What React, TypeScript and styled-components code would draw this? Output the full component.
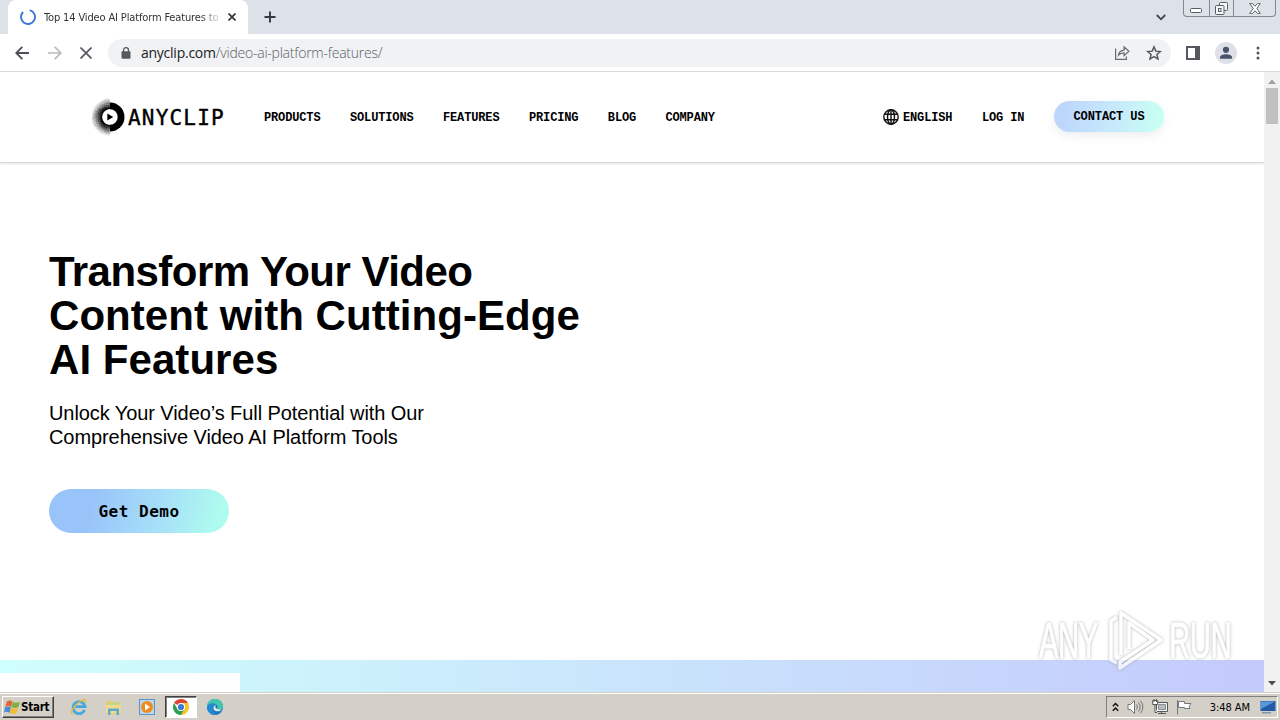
import styled, { createGlobalStyle } from "styled-components";

const uiFont = `"DejaVu Sans Condensed", "DejaVu Sans", sans-serif`;

const navLinks = [
    { label: "PRODUCTS", width: 56.7 },
    { label: "SOLUTIONS", width: 63.7 },
    { label: "FEATURES", width: 56.7 },
    { label: "PRICING", width: 49.6 },
    { label: "BLOG", width: 28.3 },
    { label: "COMPANY", width: 50 },
];

// 로고 왼쪽의 흩어지는 점들
const logoDots = Array.from({ length: 600 }, (_, i) => {
    const angle = Math.PI / 2 + ((i * 0.618034) % 1) * Math.PI;
    const radius = 8 + ((i * 0.7548777) % 1) ** 1.2 * 10.5;
    return {
        x: 18 + Math.cos(angle) * radius,
        y: 20 + Math.sin(angle) * radius,
        opacity: Math.max(0.08, 0.6 - (radius - 8) / 19),
    };
});

const App = () => {
    return (
        <Screen>
            <GlobalStyle />
            <TabStrip>
                <Tab>
                    <Spinner viewBox="0 0 16 16">
                        <path d="M9.7 1.2A7 7 0 1 1 3.1 3" fill="none" stroke="#3b78d8" strokeWidth="1.9" />
                    </Spinner>
                    <TabTitle>Top 14 Video AI Platform Features to</TabTitle>
                    <svg width="8" height="8" viewBox="0 0 8 8">
                        <path d="M.5.5l7 7M7.5.5l-7 7" stroke="#333639" strokeWidth="1.7" />
                    </svg>
                </Tab>
                <NewTab viewBox="0 0 12 12">
                    <path d="M6 .5v11M.5 6h11" stroke="#36393d" strokeWidth="1.9" />
                </NewTab>
                <TabSearch viewBox="0 0 10 7">
                    <path d="M.8 1l4.2 4.3L9.2 1" fill="none" stroke="#424548" strokeWidth="1.8" />
                </TabSearch>
                <WindowButtons>
                    <WindowButton $width={25}>
                        <svg width="12" height="5" viewBox="0 0 12 5">
                            <rect x=".5" y=".5" width="11" height="4" rx="1" fill="#fff" stroke="#565a62" />
                        </svg>
                    </WindowButton>
                    <WindowButton $width={25}>
                        <svg width="13" height="13" viewBox="0 0 13 13" fill="#f7f8fa" stroke="#565a62">
                            <rect x="4.5" y=".5" width="8" height="8" rx="1" />
                            <rect x=".5" y="3.5" width="8.5" height="9" rx="1" />
                            <rect x="3.5" y="6.5" width="2.5" height="3" />
                        </svg>
                    </WindowButton>
                    <WindowButton $width={42}>
                        <svg width="12" height="11" viewBox="0 0 12 11">
                            <path
                                d="M.7.6h3L6 3.3 8.3.6h3L7.8 5.5l3.5 4.9h-3L6 7.7l-2.3 2.7h-3l3.5-4.9z"
                                fill="#fff"
                                stroke="#62666e"
                            />
                        </svg>
                    </WindowButton>
                </WindowButtons>
            </TabStrip>

            <Toolbar>
                <NavIcons>
                    <svg width="14" height="14" viewBox="0 0 14 14">
                        <path d="M14 7H1.5M7.3.9L1.2 7l6.1 6.1" fill="none" stroke="#4b4e52" strokeWidth="1.8" />
                    </svg>
                    <svg width="14" height="14" viewBox="0 0 14 14">
                        <path d="M0 7h12.5M6.7.9L12.8 7l-6.1 6.1" fill="none" stroke="#b8babd" strokeWidth="1.7" />
                    </svg>
                    <svg width="12" height="12" viewBox="0 0 12 12">
                        <path d="M.5.5l11 11M11.5.5l-11 11" stroke="#55585c" strokeWidth="1.7" />
                    </svg>
                </NavIcons>
                <AddressBar>
                    <svg width="10" height="12" viewBox="0 0 10 12">
                        <path d="M2.5 5V3a2.5 2.3 0 0 1 5 0v2" fill="none" stroke="#55585c" strokeWidth="1.3" />
                        <rect x=".5" y="4.3" width="9" height="7.5" rx="1" fill="#55585c" />
                    </svg>
                    <Url>
                        <b>anyclip.com</b>/video-ai-platform-features/
                    </Url>
                    <svg width="16" height="15" viewBox="0 0 16 15" fill="none" stroke="#686b70" strokeWidth="1.2">
                        <path d="M1.6 3.5v10.9h10.8v-3" />
                        <path d="M4.5 10.2c.5-3 2.3-4.9 5.6-5.1V1.8l4.8 4.5-4.8 4.4V7.9c-2.4 0-4.2.7-5.6 2.3z" />
                    </svg>
                    <Star viewBox="0 0 24 24">
                        <path
                            d="M12 2.8l2.7 6.4 6.9.6-5.2 4.5 1.6 6.8-6-3.6-6 3.6 1.6-6.8-5.2-4.5 6.9-.6z"
                            fill="none"
                            stroke="#53565a"
                            strokeWidth="2.2"
                        />
                    </Star>
                </AddressBar>
                <SidePanelIcon viewBox="0 0 14 14">
                    <path d="M1 1h12v12H1z" fill="#fff" stroke="#55585c" strokeWidth="2" />
                    <path d="M9 1h4v12H9z" fill="#55585c" />
                </SidePanelIcon>
                <Avatar viewBox="0 0 22 22">
                    <circle cx="11" cy="11" r="11" fill="#dde1e7" />
                    <circle cx="11" cy="7.8" r="3.1" fill="#49546c" />
                    <path d="M5 16.8v-1.5c0-4 12-4 12 0v1.5z" fill="#49546c" />
                </Avatar>
                <svg width="4" height="14" viewBox="0 0 4 14" fill="#505357">
                    <circle cx="2" cy="2" r="1.5" />
                    <circle cx="2" cy="7" r="1.5" />
                    <circle cx="2" cy="12" r="1.5" />
                </svg>
            </Toolbar>

            <Viewport>
                <Page>
                    <SiteHeader>
                        <Logo>
                            <svg width="36" height="40" viewBox="0 0 36 40">
                                {logoDots.map((dot, i) => (
                                    <circle key={i} cx={dot.x} cy={dot.y} r=".75" opacity={dot.opacity} />
                                ))}
                                <path d="M18 5.5a14.5 14.5 0 0 1 0 29z" />
                                <circle cx="18" cy="20" r="7.7" fill="#fff" />
                                <path d="M15.3 16.4l6 3.5-6 3.6z" />
                            </svg>
                            <LogoName>ANYCLIP</LogoName>
                        </Logo>
                        <Menu>
                            {navLinks.map((link) => (
                                <MenuLink key={link.label} $width={link.width}>
                                    {link.label}
                                </MenuLink>
                            ))}
                        </Menu>
                        <HeaderActions>
                            <Language>
                                <svg width="16" height="16" viewBox="0 0 16 16" fill="none" stroke="#111" strokeWidth="1.4">
                                    <circle cx="8" cy="8" r="7.2" />
                                    <ellipse cx="8" cy="8" rx="3.5" ry="7.2" />
                                    <path d="M8 .8v14.4M1.3 5.3h13.4M1.3 10.7h13.4" />
                                </svg>
                                <MenuLink $width={50}>ENGLISH</MenuLink>
                            </Language>
                            <MenuLink $width={43}>LOG IN</MenuLink>
                            <ContactButton>CONTACT US</ContactButton>
                        </HeaderActions>
                    </SiteHeader>

                    <Hero>
                        <Headline>
                            <HeadlineLine $spacing={-0.54}>Transform Your Video</HeadlineLine>
                            <HeadlineLine $spacing={0.05}>Content with Cutting-Edge</HeadlineLine>
                            <HeadlineLine $spacing={0.05}>AI Features</HeadlineLine>
                        </Headline>
                        <Lead>
                            Unlock Your Video’s Full Potential with Our
                            <br />
                            Comprehensive Video AI Platform Tools
                        </Lead>
                        <DemoButton>Get Demo</DemoButton>
                    </Hero>

                    <Band>
                        <StatusBubble />
                    </Band>
                </Page>
                <Scrollbar>
                    <svg width="8" height="5" viewBox="0 0 8 5">
                        <path d="M0 5l4-4.5L8 5z" fill="#a0a0a0" />
                    </svg>
                    <Thumb />
                    <ScrollDown viewBox="0 0 8 5">
                        <path d="M0 0h8L4 4.5z" fill="#4c4c4c" />
                    </ScrollDown>
                </Scrollbar>
            </Viewport>

            <Taskbar>
                <StartButton>
                    <svg width="17" height="16" viewBox="0 0 17 16">
                        <path d="M3 2.3C5 1 7 1.2 8.5 2.4L7.2 8C5.3 6.500 3.500 6.600 1.200 7.900z" fill="#e2663a" />
                        <path d="M9 2.700c2 1.200 4.500 1.200 7 0L14.400 8c-2.200 1.200-4.700 1.200-6.900.2z" fill="#7fb143" />
                        <path d="M1 8.400c2-1.300 4-1.200 6-.1L5.500 14C3.500 12.500 1.800 12.600 0 13.600z" fill="#4b8bd0" />
                        <path d="M7.300 8.700c2 1.100 4.500 1 6.900-.2l-1.500 5.500c-2.300 1.300-4.800 1.200-7 .1z" fill="#f1bd38" />
                    </svg>
                    Start
                </StartButton>
                <QuickLaunch>
                    <TaskItem>
                        <svg width="18" height="18" viewBox="0 0 18 18" fill="none">
                            <path d="M14.6 12A6 6 0 1 1 15 8.7H5.3" stroke="#45a9df" strokeWidth="2.8" />
                            <path d="M3 15.5C-1 17 3 8 10 3.5c5-3.2 7-1.5 5 1.5" stroke="#e8bd43" strokeWidth="1.4" />
                        </svg>
                    </TaskItem>
                    <TaskItem>
                        <svg width="17" height="17" viewBox="0 0 17 17">
                            <path d="M1 3l1-1h4l1 1h8v12H1z" fill="#e6c96b" />
                            <path d="M3 4h11v3H3z" fill="#b8d995" />
                            <path d="M1 6h15v8H1z" fill="#f0dc8c" />
                            <path d="M3 16V9.5h11V16h-2.500v-4h-6v4z" fill="#5faad4" />
                        </svg>
                    </TaskItem>
                    <TaskItem>
                        <svg width="16" height="16" viewBox="0 0 16 16">
                            <rect x=".5" y=".5" width="15" height="15" fill="#b9d9f2" stroke="#5b94c8" />
                            <circle cx="8" cy="8" r="6" fill="#ef8a1d" />
                            <path d="M6 4.5l5 3.5-5 3.5z" fill="#fff" />
                        </svg>
                    </TaskItem>
                    <TaskItem $active>
                        <svg width="16" height="16" viewBox="0 0 16 16">
                            <path d="M8 8L1.07 4A8 8 0 0 1 14.93 4z" fill="#dc4437" />
                            <path d="M8 8V4h6.93A8 8 0 0 1 8 16z" fill="#f6c629" />
                            <path d="M8 16A8 8 0 0 1 1.07 4L4.5 10 8 12l3.5-2z" fill="#2f9e50" />
                            <circle cx="8" cy="8" r="4" fill="#fff" />
                            <circle cx="8" cy="8" r="3.1" fill="#3b78d8" />
                        </svg>
                    </TaskItem>
                    <TaskItem>
                        <svg width="16" height="16" viewBox="0 0 16 16">
                            <circle cx="8" cy="8" r="8" fill="#1675c0" />
                            <path d="M0 8C.5-2.5 15.5-2.5 16 7.5c0 3-4 4-6.2 2.5C13 6 5 1 0 8z" fill="#42c6ae" />
                            <path d="M0 8C1 4 6 3 9 6 5 6 4 12 10 15.7 4 17 0 13 0 8z" fill="#2289d3" />
                            <path d="M9 6c-1.500 1.500-.8 5 6 4.500-2 2.500-7.500 2.500-8.500-.5C6 8 7.500 6 9 6z" fill="#d9e9e9" />
                        </svg>
                    </TaskItem>
                </QuickLaunch>
                <Tray>
                    <svg width="7" height="10" viewBox="0 0 7 10" fill="none" stroke="#111" strokeWidth="1.5">
                        <path d="M.8 4.3l2.7-2.8 2.7 2.8M.8 8.8L3.5 6l2.7 2.8" />
                    </svg>
                    <svg width="17" height="16" viewBox="0 0 17 16" fill="none" stroke="#74777b">
                        <path d="M1 5.5h2.5L7.5 1.500v13l-4-4H1z" fill="#fff" />
                        <path d="M9.5 5.5q1.8 2.5 0 5M11.5 3.5q3.3 4.5 0 9M13.5 1.7q4.8 6.3 0 12.6" />
                    </svg>
                    <svg width="16" height="16" viewBox="0 0 16 16" stroke="#55585b">
                        <path d="M4.5 3.5h11v9h-11z" fill="#f5f5f2" />
                        <path d="M6.5 5.5h7v5h-7z" fill="#b9bcbd" stroke="#8c8f91" />
                        <path d="M6 14.5h8M9.5 12.5v2" fill="none" />
                        <path d="M.7 1.5v4h5v-4zM2 0v3M4.5 0v3M3 5.5v8h2" fill="#fff" />
                    </svg>
                    <svg width="17" height="16" viewBox="0 0 17 16" fill="#fff" stroke="#74777b">
                        <path d="M1.5 1v14.5M2.5 2.5h6v2h6.5l-2 3 1 2H8.5v-1h-6z" />
                    </svg>
                    <Clock>3:48 AM</Clock>
                    <svg width="16" height="14" viewBox="0 0 16 14">
                        <path d="M.5 1h15v10H.5z" fill="#225ba8" />
                        <path d="M1 1.5h14L1 9z" fill="#5599dc" />
                        <path d="M2 12h9v1.5H2z" fill="#7798ad" />
                    </svg>
                </Tray>
            </Taskbar>

            <Watermark>
                <WatermarkWord $width={66}>
                    <span>ANY</span>
                </WatermarkWord>
                <svg width="58" height="64" viewBox="0 0 58 64" fill="none">
                    <path
                        d="M9 8L3 12v39l6 3M13 46V4l40 27-41 28v-6l33-22L21 14v26"
                        stroke="#fff"
                        strokeWidth="3.5"
                        strokeLinejoin="round"
                    />
                </svg>
                <WatermarkWord $width={64}>
                    <span>RUN</span>
                </WatermarkWord>
            </Watermark>
        </Screen>
    );
};

export default App;

// Styled Components
const GlobalStyle = createGlobalStyle`
    * {
        box-sizing: border-box;
    }

    body {
        margin: 0;
        overflow: hidden;
    }

    svg {
        display: block;
        flex-shrink: 0;
    }
`;

const Screen = styled.div`
    position: relative;
    display: flex;
    flex-direction: column;
    width: 1280px;
    height: 720px;
    background: #fff;
    color: #000;
    overflow: hidden;
`;

const TabStrip = styled.div`
    display: flex;
    height: 34px;
    padding-left: 8px;
    background: #dde1e8;
`;

const Tab = styled.div`
    display: flex;
    align-items: center;
    width: 240px;
    padding: 0 12px;
    background: #fff;
    border-radius: 8px 8px 0 0;
`;

const Spinner = styled.svg`
    width: 16px;
    height: 16px;
`;

const TabTitle = styled.div`
    width: 177px;
    margin: 1px 7px 0 8px;
    font: 11px/16px ${uiFont};
    letter-spacing: -0.14px;
    white-space: nowrap;
    overflow: hidden;
    color: #303236;
    mask-image: linear-gradient(90deg, #000 88%, transparent 101%);
`;

const NewTab = styled.svg`
    width: 12px;
    height: 12px;
    margin: 11px 0 0 16px;
`;

const TabSearch = styled.svg`
    width: 10px;
    height: 7px;
    margin: 14px 17px 0 auto;
`;

const WindowButtons = styled.div`
    display: flex;
    width: 93px;
    height: 17px;
    margin-right: 4px;
    border: 1px solid #84888f;
    border-top: 0;
    border-radius: 0 0 4px 4px;
`;

const WindowButton = styled.div<{ $width: number }>`
    display: flex;
    align-items: center;
    justify-content: center;
    width: ${({ $width }) => $width}px;

    & + & {
        border-left: 1px solid #84888f;
    }

    &:first-child {
        padding-top: 4px;
    }
`;

const Toolbar = styled.div`
    display: flex;
    align-items: center;
    height: 38px;
    padding: 0 20px 0 15px;
    border-bottom: 1px solid #d9dadc;
`;

const NavIcons = styled.div`
    display: flex;
    align-items: center;
    gap: 18.5px;
    width: 93px;
`;

const AddressBar = styled.div`
    display: flex;
    align-items: center;
    width: 1064px;
    height: 28px;
    padding: 0 9px 0 13px;
    border-radius: 14px;
    background: #f0f2f4;
`;

const Url = styled.div`
    flex: 1;
    margin-left: 10px;
    font: 300 14px/20px "Open Sans", "Noto Sans", sans-serif;
    letter-spacing: -0.24px;
    color: #5c6065;

    b {
        font-weight: 400;
        color: #202225;
    }
`;

const Star = styled.svg`
    width: 16px;
    height: 16px;
    margin-left: 16px;
`;

const SidePanelIcon = styled.svg`
    width: 14px;
    height: 14px;
    margin-left: 15px;
`;

const Avatar = styled.svg`
    width: 22px;
    height: 22px;
    margin: 0 19px 0 15px;
`;

const Viewport = styled.div`
    display: flex;
    height: 620px;
`;

const Page = styled.main`
    display: flex;
    flex-direction: column;
    width: 1264px;
`;

const SiteHeader = styled.header`
    display: flex;
    align-items: center;
    height: 91px;
    padding: 0 100px 0 92px;
    border-bottom: 1px solid #d5d5d5;
    box-shadow: 0 1px 2px #e6e6e6;
`;

const Logo = styled.div`
    display: flex;
    align-items: center;
    width: 172px;
`;

const LogoName = styled.span`
    margin-top: 1px;
    font: 21px/24px "DejaVu Sans Mono", monospace;
    letter-spacing: 1.2px;
    -webkit-text-stroke: 0.4px #000;
`;

const Menu = styled.nav`
    display: flex;
    gap: 29.3px;
`;

const MenuLink = styled.span<{ $width: number }>`
    width: ${({ $width }) => $width}px;
    padding-top: 1px;
    font: bold 12px/16px "Liberation Mono", monospace;
    letter-spacing: -0.14px;
    white-space: nowrap;
`;

const HeaderActions = styled.div`
    display: flex;
    align-items: center;
    gap: 29px;
    margin-left: auto;
`;

const Language = styled.div`
    display: flex;
    align-items: center;
    gap: 4px;
`;

const ContactButton = styled.div`
    width: 110px;
    height: 31px;
    margin-bottom: 1px;
    border-radius: 16px;
    background: linear-gradient(100deg, #bdd7fc 10%, #c7e9fb 55%, #c8fff3 95%);
    box-shadow: 0 4px 9px rgba(120, 130, 150, 0.13);
    font: bold 12px/33px "Liberation Mono", monospace;
    letter-spacing: -0.1px;
    text-align: center;
`;

const Hero = styled.section`
    display: flex;
    flex: 1;
    flex-direction: column;
    align-items: flex-start;
    padding: 87px 0 0 49px;
`;

const Headline = styled.h1`
    margin: 0;
    font: bold 42px/44px "Liberation Sans", Arial, sans-serif;
`;

const HeadlineLine = styled.span<{ $spacing: number }>`
    display: block;
    letter-spacing: ${({ $spacing }) => $spacing}px;
    white-space: nowrap;
`;

const Lead = styled.p`
    margin: 19px 0 0;
    font: 20px/24px "Liberation Sans", Arial, sans-serif;
    letter-spacing: -0.08px;
    white-space: nowrap;
`;

const DemoButton = styled.div`
    width: 180px;
    height: 44px;
    margin-top: 40px;
    border-radius: 22px;
    background: linear-gradient(105deg, #99c4f9 25%, #a6e0f8 62%, #aefbef 92%);
    font: bold 16px/46px "DejaVu Sans Mono", monospace;
    letter-spacing: 0.5px;
    text-align: center;
`;

const Band = styled.div`
    display: flex;
    align-items: flex-end;
    height: 32px;
    background: linear-gradient(90deg, #cffffc, #c4cafc);
`;

const StatusBubble = styled.div`
    width: 240px;
    height: 19px;
    background: #fefefe;
`;

const Scrollbar = styled.div`
    display: flex;
    flex-direction: column;
    align-items: center;
    width: 16px;
    padding: 7px 0 6px;
    background: #f1f1f1;
`;

const Thumb = styled.div`
    width: 12px;
    height: 36px;
    margin-top: 4px;
    background: #c1c1c1;
`;

const ScrollDown = styled.svg`
    width: 8px;
    height: 5px;
    margin-top: auto;
`;

const Taskbar = styled.footer`
    display: flex;
    align-items: center;
    height: 28px;
    padding: 1px 2px 0;
    border-top: 1px solid #d4d0c8;
    background: #d4d0c8;
    box-shadow: inset 0 1px #fff;
`;

const StartButton = styled.div`
    display: flex;
    align-items: center;
    width: 52px;
    height: 22px;
    padding-left: 1px;
    border: 1px solid;
    border-color: #fff #404040 #404040 #fff;
    box-shadow: inset -1px -1px #808080;
    font: bold 11.5px/16px ${uiFont};
    letter-spacing: -0.25px;
    white-space: nowrap;
`;

const QuickLaunch = styled.div`
    display: flex;
    gap: 2px;
    margin-left: 9px;
`;

const TaskItem = styled.div<{ $active?: boolean }>`
    display: flex;
    align-items: center;
    justify-content: center;
    width: 32px;
    height: 22px;
    border: 1px solid transparent;
    ${({ $active }) => $active && "background: #fff; border-color: #404040 #fff #fff #404040; box-shadow: inset 1px 1px #808080;"}
`;

const Tray = styled.div`
    display: flex;
    align-items: center;
    gap: 8px;
    width: 172px;
    height: 22px;
    margin-left: auto;
    padding: 0 1px 0 5px;
    border: 1px solid;
    border-color: #808080 #fff #fff #808080;
`;

const Clock = styled.span`
    margin: 1px 2px 0 auto;
    font: 11px/16px ${uiFont};
    letter-spacing: -0.05px;
    white-space: nowrap;
`;

const Watermark = styled.div`
    position: absolute;
    top: 609px;
    left: 1039px;
    display: flex;
    align-items: center;
    gap: 3px;
    opacity: 0.75;
    filter: drop-shadow(0 0 1.5px #999);
`;

const WatermarkWord = styled.div<{ $width: number }>`
    width: ${({ $width }) => $width}px;
    font: 50px/64px "Liberation Sans", Arial, sans-serif;
    letter-spacing: -1px;
    color: #fff;

    span {
        display: inline-block;
        transform: scaleX(0.59);
        transform-origin: left center;
        -webkit-text-stroke: 1px #fff;
    }
`;
